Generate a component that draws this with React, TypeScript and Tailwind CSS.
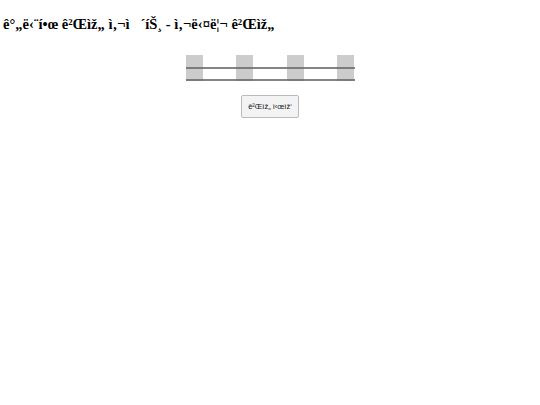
export default function App() {
  const posts = [0, 1, 2, 3]

  return (
    <div className="min-h-[405px] bg-white font-['Liberation_Serif',serif] text-black">
      <h1 className="pl-[3px] pt-[16px] text-[14.5px] leading-[16px] font-bold">
        ê°„ë‹¨í•œ ê²Œìž„ ì‚¬ì&nbsp;&nbsp;&nbsp;´íŠ¸ - ì‚¬ë‹¤ë¦¬ ê²Œìž„
      </h1>

      <div className="mt-[23px] flex justify-center">
        <div className="relative flex h-[26px] w-[169px] justify-between">
          {posts.map((p) => (
            <div key={p} className="h-full w-[17px] bg-[#cccccc]" />
          ))}
          <div className="absolute left-0 right-0 top-[12px] h-[2px] bg-[#666666]/80" />
          <div className="absolute left-0 right-0 top-[24px] h-[2px] bg-[#666666]/80" />
        </div>
      </div>

      <div className="mt-[14px] flex justify-center">
        <button className="h-[23px] w-[58px] rounded-[2px] border border-[#bbbbbb] bg-[#f3f3f3] font-['Liberation_Sans',sans-serif] text-[7.5px] text-[#111111]">
          ê²Œìž„ ì‹œìž‘
        </button>
      </div>
    </div>
  )
}
